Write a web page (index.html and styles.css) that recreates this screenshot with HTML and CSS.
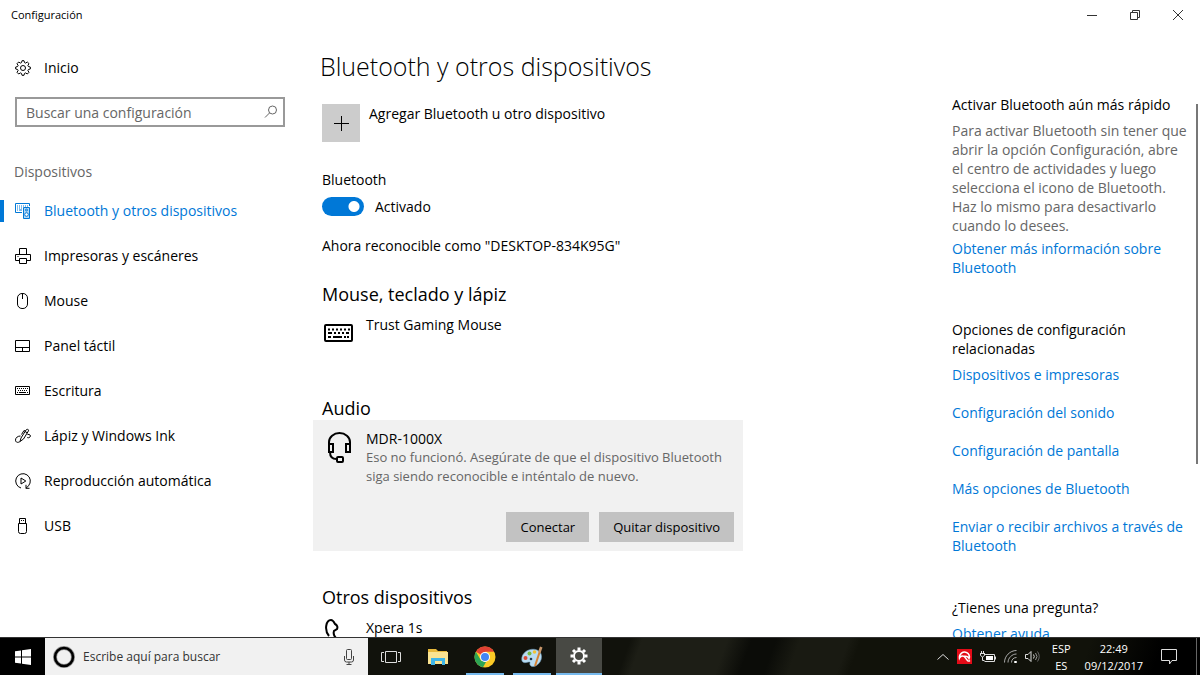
FILE: index.html
```html
<!DOCTYPE html>
<html lang="es">
<head>
<meta charset="utf-8">
<meta name="viewport" content="width=device-width, initial-scale=1">
<title>Configuración</title>
<link rel="stylesheet" href="styles.css">
</head>
<body>
<header class="titlebar">
  <span class="titlebar-name">Configuración</span>
  <div class="window-controls">
    <button type="button" aria-label="Minimizar"><svg width="12" height="12" viewBox="0 0 12 12"><path d="M1 6.500h10"/></svg></button>
    <button type="button" aria-label="Restaurar"><svg width="12" height="12" viewBox="0 0 12 12"><path d="M1.500 3.500h7v7h-7zM3.500 3.500v-2h7v7h-2"/></svg></button>
    <button type="button" aria-label="Cerrar"><svg width="12" height="12" viewBox="0 0 12 12"><path d="M1 1l10 10M11 1L1 11"/></svg></button>
  </div>
</header>

<div class="workspace">
  <nav class="sidebar" aria-label="Dispositivos">
    <a class="nav-item home" href="#inicio">
      <svg class="icon" width="16" height="16" viewBox="0 0 16 16"><path d="M6.500 2.600 7 .7h2l.5 1.900 1.100.5L12.300 2l1.700 1.700-1.100 1.700.5 1.100 1.900.5v2l-1.900.5-.5 1.100 1.100 1.700-1.700 1.700-1.700-1.100-1.100.5-.5 1.900H7l-.5-1.900-1.100-.5L3.700 14 2 12.300l1.100-1.700-.5-1.100L.7 9V7l1.900-.5.5-1.100L2 3.700 3.700 2l1.700 1.100z"/><circle cx="8" cy="8" r="2.500"/></svg>
      <span>Inicio</span>
    </a>
    <label class="search">
      <input type="search" placeholder="Buscar una configuración" aria-label="Buscar una configuración">
      <svg width="14" height="14" viewBox="0 0 14 14"><circle cx="8.500" cy="5" r="4"/><path d="M5.600 7.900 1 12.500"/></svg>
    </label>
    <h2 class="nav-heading">Dispositivos</h2>
    <a class="nav-item current" href="#bluetooth" aria-current="page">
      <svg class="icon" width="16" height="16" viewBox="0 0 16 16"><path d="M7 9.500H.5v-9h14V3M2 3h1m1 0h1m1 0h1m1 0h1m1 0h1m1 0h1M2 5h1m1 0h1m1 0h1M2 7h1m1 0h3"/><path fill="#b5d8f5" d="M8.500 4.500h6v11h-6z"/><circle cx="11.500" cy="7" r="1"/><circle cx="11.500" cy="11.500" r="1.800" fill="#fff"/></svg>
      <span>Bluetooth y otros dispositivos</span>
    </a>
    <a class="nav-item" href="#impresoras">
      <svg class="icon" width="16" height="16" viewBox="0 0 16 16"><path d="M4.500 6V.5h7V6M4.500 12.500h-4v-6h15v6h-4M4.500 10.500h7v5h-7zM2.500 8.500h1"/></svg>
      <span>Impresoras y escáneres</span>
    </a>
    <a class="nav-item" href="#mouse">
      <svg class="icon" width="16" height="16" viewBox="0 0 16 16"><rect x="2.500" y=".5" width="10" height="15" rx="4.500"/><path d="M7.500 1v5"/></svg>
      <span>Mouse</span>
    </a>
    <a class="nav-item" href="#panel">
      <svg class="icon" width="16" height="16" viewBox="0 0 16 16"><path d="M.5 2.500h14v11H.5zM.5 9.500h14M7.500 9.500v4"/></svg>
      <span>Panel táctil</span>
    </a>
    <a class="nav-item" href="#escritura">
      <svg class="icon" width="16" height="16" viewBox="0 0 16 16"><path d="M.5 3.500h14v8H.5z"/><path stroke-dasharray="1 1" d="M2 5.500h11M3 7.500h9"/><path d="M2 9.500h1m1 0h7m1 0h1"/></svg>
      <span>Escritura</span>
    </a>
    <a class="nav-item" href="#lapiz">
      <svg class="icon" width="16" height="16" viewBox="0 0 16 16"><path d="M5 13.500 6 10l5-8c.6-1 3-1 2.500.8L8.500 11zM10 3.500 12.600 5M10 3 9 2.500 6.500 6.500M5.500 8C3 8 .5 9.500.5 12s2.500 3 4.500 1.500M12.500 6.500c2.500-.5 3.500 1 2.500 2.500-.7 1-2 .8-2.800.5"/></svg>
      <span>Lápiz y Windows Ink</span>
    </a>
    <a class="nav-item" href="#reproduccion">
      <svg class="icon" width="16" height="16" viewBox="0 0 16 16"><path d="M6 15A7.300 7.300 0 1 1 13.500 12.800L11 15.300M11 11.800v3.500h3.500M6 5v6l4.800-3z"/></svg>
      <span>Reproducción automática</span>
    </a>
    <a class="nav-item" href="#usb">
      <svg class="icon" width="16" height="16" viewBox="0 0 16 16"><path d="M4.500 5V.5h6V5M3.500 5.500h8v8q0 2-2 2h-4q-2 0-2-2zM6 2.500h1m1 0h1"/></svg>
      <span>USB</span>
    </a>
  </nav>

  <main class="content">
    <h1>Bluetooth y otros dispositivos</h1>
    <button type="button" class="add-device">
      <span class="add-tile"><svg width="16" height="16" viewBox="0 0 16 16"><path d="M8.500 1v15M1 8.500h15"/></svg></span>
      <span>Agregar Bluetooth u otro dispositivo</span>
    </button>
    <p class="toggle-title">Bluetooth</p>
    <label class="toggle"><input type="checkbox" role="switch" aria-label="Bluetooth" checked><span>Activado</span></label>
    <p class="discoverable">Ahora reconocible como "DESKTOP-834K95G"</p>

    <section class="group">
      <h2>Mouse, teclado y lápiz</h2>
      <div class="device plain">
        <svg class="device-icon" width="30" height="34" viewBox="0 0 30 34"><rect x="2" y="10" width="27" height="16" rx="1"/><path stroke-dasharray="2 2" d="M5 14.500h22"/><path d="M5 18h4m2 0h2m2 0h2m2 0h2m2 0h3M5 22h3m2 0h9m2 0h2m1 0h2"/></svg>
        <span>Trust Gaming Mouse</span>
      </div>
    </section>

    <section class="group">
      <h2>Audio</h2>
      <div class="device selected">
        <svg class="device-icon" width="30" height="34" viewBox="0 0 30 34"><path d="M6 16v-3a10.500 9 0 0 1 21 0v3M6 15h4v8H6zM23 15h4v8h-4zM7 23c0 4 2 7 6.500 7M15 28h4q1 0 1 1v3q0 1-1 1h-4q-1 0-1-1v-3q0-1 1-1z"/></svg>
        <div class="device-info">
          <span class="device-name">MDR-1000X</span>
          <p class="device-status">Eso no funcionó. Asegúrate de que el dispositivo Bluetooth siga siendo reconocible e inténtalo de nuevo.</p>
        </div>
        <div class="device-actions">
          <button type="button">Conectar</button>
          <button type="button">Quitar dispositivo</button>
        </div>
      </div>
    </section>

    <section class="group">
      <h2>Otros dispositivos</h2>
      <div class="device plain">
        <svg class="device-icon" width="30" height="34" viewBox="0 0 30 34"><path d="M6 18C1 12 3 2 8 2c2 0 3 2 4 4 2 1 3 3 2 5l-3 2c-1 3 0 5 2 7"/></svg>
        <span>Xpera 1s</span>
      </div>
    </section>
  </main>

  <aside class="related">
    <section>
      <h2>Activar Bluetooth aún más rápido</h2>
      <p>Para activar Bluetooth sin tener que abrir la opción Configuración, abre el centro de actividades y luego selecciona el icono de Bluetooth. Haz lo mismo para desactivarlo cuando lo desees.</p>
      <a href="#info">Obtener más información sobre Bluetooth</a>
    </section>
    <section class="link-list">
      <h2>Opciones de configuración relacionadas</h2>
      <a href="#dispositivos">Dispositivos e impresoras</a>
      <a href="#sonido">Configuración del sonido</a>
      <a href="#pantalla">Configuración de pantalla</a>
      <a href="#mas">Más opciones de Bluetooth</a>
      <a href="#archivos">Enviar o recibir archivos a través de Bluetooth</a>
    </section>
    <section>
      <h2>¿Tienes una pregunta?</h2>
      <a href="#ayuda">Obtener ayuda</a>
    </section>
  </aside>
  <div class="scroll-track"><div class="scroll-thumb"></div></div>
</div>

<footer class="taskbar">
  <button type="button" class="start" aria-label="Inicio de Windows"><svg width="16" height="16" viewBox="0 0 16 16"><path fill="#fff" d="M0 2.300 6 1.500v6H0zM7 1.300 16 0v7.500H7zM0 8.500h6v6l-6-.8zM7 8.500h9V16l-9-1.300z"/></svg></button>
  <label class="cortana">
    <svg width="22" height="22" viewBox="0 0 22 22"><circle cx="11" cy="11" r="9" fill="none" stroke="#999" stroke-width="4"/><circle cx="11" cy="11" r="9" fill="none" stroke="#000" stroke-width="2.500"/></svg>
    <input type="text" placeholder="Escribe aquí para buscar" aria-label="Escribe aquí para buscar">
    <svg width="12" height="16" viewBox="0 0 12 16" fill="none" stroke="#444"><rect x="3.500" y=".5" width="5" height="10" rx="1"/><path d="M1.500 7v4q0 2 2 2h5q2 0 2-2V7M6 13v2.500M3.500 15.500h5"/></svg>
  </label>
  <div class="apps">
    <button type="button" aria-label="Vista de tareas"><svg width="20" height="14" viewBox="0 0 20 14" fill="none" stroke="#ddd"><path d="M4.500 1.500h11v11h-11zM3 2.500H.5v9H3M17 2.500h2.500v9H17"/></svg></button>
    <button type="button" aria-label="Explorador de archivos"><svg width="20" height="18" viewBox="0 0 20 18"><path fill="#e8b93c" d="M0 1h8l2 2h9v5H0z"/><path fill="#fae391" d="M0 4h20v12H0z"/><path fill="#3fb5e8" d="M3 10h14v7h-3v-4H7v4H3z"/></svg></button>
    <button type="button" class="open" aria-label="Chrome"><svg width="22" height="22" viewBox="0 0 22 22"><circle cx="11" cy="11" r="10.500" fill="#fbc926"/><path fill="#e14134" d="M11 11 1.900 5.700A10.500 10.500 0 0 1 20.100 5.800H11z"/><path fill="#2ca455" d="M1.900 5.700 7 14.500l5 1.500-3 5.300A10.500 10.500 0 0 1 1.900 5.700z"/><circle cx="11" cy="11" r="5" fill="#fff"/><circle cx="11" cy="11" r="4" fill="#4285f4"/></svg></button>
    <button type="button" class="open" aria-label="Paint"><svg width="22" height="22" viewBox="0 0 22 22"><path fill="#b9dcf2" stroke="#719dbd" stroke-width=".6" d="M1 15C-1 7 9 1 16 4c7 3 5 12 0 15-4 3-8 1-7-2s-6 2-8-2z"/><circle cx="4.500" cy="12" r="2" fill="#d94b37"/><circle cx="8.500" cy="7.500" r="2" fill="#75b943"/><circle cx="13.500" cy="6" r="1.800" fill="#f1c232"/><circle cx="10" cy="13" r="1.300" fill="#20384e"/><path d="M19 5 14 20" stroke="#d78232" stroke-width="2"/><path d="m17 6 2-5.500 2.500 1-2 5.500z" fill="#c8966a"/></svg></button>
    <button type="button" class="open active" aria-label="Configuración"><svg width="18" height="18" viewBox="0 0 18 18" fill="none" stroke="#fff"><circle cx="9" cy="9" r="5" stroke-width="2"/><path stroke-width="3" d="M9 .5V3.500M9 14.500v3M.5 9h3M14.500 9h3M3 3l2 2M13 13l2 2M15 3l-2 2M5 13l-2 2"/></svg></button>
  </div>
  <div class="tray">
    <button type="button" aria-label="Mostrar iconos ocultos"><svg width="12" height="8" viewBox="0 0 12 8" fill="none" stroke="#ddd"><path d="m.5 6.500 5.500-5 5.500 5"/></svg></button>
    <button type="button" aria-label="Antivirus"><svg width="15" height="15" viewBox="0 0 15 15"><path fill="#e30b17" d="M0 0h15v15H0z"/><path fill="none" stroke="#fff" stroke-width="1.600" d="M2.500 9C2 5 6 2 9.500 3.500 12 4.500 13 7 12 9.500 11 7.500 9 7 7.500 7.500 5 6.500 3.500 7 2.500 9z"/><path d="m7 7 3 4q1.500 2 3 .5" fill="none" stroke="#fff" stroke-width="1.300"/></svg></button>
    <button type="button" aria-label="Batería"><svg width="16" height="12" viewBox="0 0 16 12"><path d="M5 3.500h9.500v7h-10" fill="none" stroke="#ddd"/><path d="M6 5h7v4H6z" fill="#fff"/><path fill="#ddd" d="M15 5.500h1v3h-1z"/><path d="M1.500 0v2M3.500 0v2M0 2.500h5M.5 2.500v2l2 1.500 2-1.500v-2M2.500 6v3.500h2" fill="none" stroke="#ddd"/></svg></button>
    <button type="button" aria-label="Red wifi"><svg width="13" height="13" viewBox="0 0 13 13" fill="none" stroke="#aaa"><path d="M.5 12.500C.5 6 6 .5 12.500.5M4 12.500C4 8 8 4 12.500 4M7.500 12.500c0-3 2-5 5-5"/><path stroke="#fff" d="M10.500 11.500h2v1h-2z"/></svg></button>
    <button type="button" aria-label="Volumen"><svg width="15" height="13" viewBox="0 0 15 13" fill="none" stroke="#ddd"><path d="M.5 4.500H3l3-3v10l-3-3H.5zM8.500 4.500q1.500 2 0 4"/><path stroke="#999" d="M10.500 3q3 3.500 0 7"/><path stroke="#666" d="M12.500 1.500q3.500 5 0 10"/></svg></button>
    <button type="button" class="stack language"><span>ESP</span><span>ES</span></button>
    <button type="button" class="stack clock"><span>22:49</span><span>09/12/2017</span></button>
    <button type="button" class="notifications" aria-label="Notificaciones"><svg width="16" height="16" viewBox="0 0 16 16" fill="none" stroke="#ddd"><path d="M.5.5h15v11H11L8.500 15v-3.500h-8z"/></svg></button>
  </div>
  <span class="show-desktop"></span>
</footer>
</body>
</html>
```
FILE: styles.css
```css
* { box-sizing: border-box; }

body {
  margin: 0;
  height: 100vh;
  display: flex;
  flex-direction: column;
  overflow: hidden;
  background: #fff;
  color: #000;
  font-family: "Open Sans", "Noto Sans", sans-serif;
  font-size: 14px;
  line-height: 19px;
}

h1, h2, p { margin: 0; font-weight: 400; }
a { color: #0078d7; text-decoration: none; }
button, input { font: inherit; color: inherit; }
button { border: 0; padding: 0; background: none; }
svg { flex: none; display: block; }

.titlebar { display: flex; justify-content: space-between; height: 30px; padding-left: 11px; }
.titlebar-name { font-size: 11px; line-height: 30px; }
.window-controls { display: flex; padding-right: 1px; }
.window-controls button { width: 43px; display: grid; place-items: center; }
.window-controls svg { fill: none; stroke: #333; }

.workspace {
  flex: 1;
  min-height: 0;
  display: grid;
  grid-template-columns: 300px 1fr 244px 4px;
  overflow: hidden;
}

.sidebar { padding-top: 15px; }
.nav-item {
  display: flex;
  align-items: center;
  gap: 13px;
  height: 45px;
  padding-left: 15px;
  color: #000;
}
.icon { fill: none; stroke: currentColor; }
.current { color: #0078d7; background: linear-gradient(#0078d7, #0078d7) left center / 4px 22px no-repeat; }
.search {
  display: flex;
  align-items: center;
  height: 30px;
  margin: 7px 15px 35px;
  padding: 0 5px 0 9px;
  border: 2px solid #999;
}
.search input, .cortana input { flex: 1; min-width: 0; padding: 0; border: 0; outline: 0; background: none; }
.search input::placeholder { color: #666; opacity: 1; }
.search svg { fill: none; stroke: #666; }
.nav-heading { margin: 0 14px 7px; font-size: 14px; line-height: 19px; color: #666; }

.content { padding: 18px 0 0 13px; }
.content > h1 { padding-left: 7px; font-size: 25px; line-height: 36px; font-weight: 300; }
.add-device { display: flex; gap: 9px; margin: 20px 0 0 9px; text-align: left; }
.add-tile { display: grid; place-items: center; width: 38px; height: 38px; background: #ccc; }
.add-tile svg { stroke: #000; }
.toggle-title { margin: 28px 0 0 9px; }
.toggle { display: flex; align-items: center; gap: 11px; margin: 8px 0 0 9px; }
.toggle input {
  appearance: none;
  width: 42px;
  height: 19px;
  margin: 0;
  border-radius: 10px;
  background: radial-gradient(circle at 32px 50%, #fff 5px, #0078d7 6px);
}
.discoverable { margin: 20px 0 0 9px; }

.group > h2 { padding-left: 9px; font-size: 18px; line-height: 24px; }
.discoverable + .group { margin-top: 27px; }
.group + .group { margin-top: 38px; }
.device { display: flex; flex-wrap: wrap; column-gap: 13px; max-width: 430px; padding: 9px 9px 9px 10px; }
.plain { padding-bottom: 5px; }
.plain + .group { margin-top: 38px; }
.device-icon { fill: none; stroke: #000; stroke-width: 2; }
.device-info { flex: 1; }
.device-status { font-size: 13px; color: #666; }
.selected { background: #f1f1f1; }
.device-actions { display: flex; justify-content: flex-end; gap: 10px; width: 100%; margin-top: 26px; }
.device-actions button { height: 30px; padding: 0 14px; background: #c2c2c2; font-size: 13px; }
.group:nth-of-type(2) { margin-top: 42px; }
.group:nth-of-type(3) { margin-top: 34px; }

.related { display: flex; flex-direction: column; gap: 43px; padding: 65px 8px 0 0; }
.related h2 { font-size: 14px; line-height: 19px; margin-bottom: 7px; }
.related p { margin-bottom: 4px; color: #666; }
.related a { display: block; }
.link-list { display: flex; flex-direction: column; }
.link-list a + a { margin-top: 19px; }

.scroll-track { padding-top: 74px; }
.scroll-thumb { width: 2px; height: 360px; background: #777; }

.taskbar {
  display: flex;
  height: 38px;
  color: #fff;
  background: linear-gradient(110deg, #11120c 0 52%, #1d1e16 53% 60%, #0b0c08 62% 64%, #191a12 66% 70%, #11120a 71% 90%, #000 96%);
  border-top: 1px solid #333;
}
.taskbar button { display: grid; place-items: center; }
.start { width: 45px; background: #000; }
.cortana { display: flex; align-items: center; gap: 8px; width: 323px; padding: 0 13px 0 8px; background: #f1f1f1; }
.cortana input { font-size: 12px; }
.cortana input::placeholder { color: #333; opacity: 1; }
.apps { display: flex; gap: 1px; }
.apps button { width: 46px; }
.open { background: linear-gradient(#76b9ed, #76b9ed) center bottom / 38px 2px no-repeat; }
.apps .active { background: #484944; border-bottom: 2px solid #76b9ed; }
.tray { display: flex; align-items: center; gap: 8px; margin-left: auto; font-size: 11px; line-height: 17px; }
.taskbar .stack { display: flex; flex-direction: column; align-items: center; }
.language { margin-left: 4px; }
.clock { margin-left: 6px; }
.notifications { margin: 0 19px 0 10px; }
.show-desktop { width: 4px; border-left: 1px solid #666; }
```
